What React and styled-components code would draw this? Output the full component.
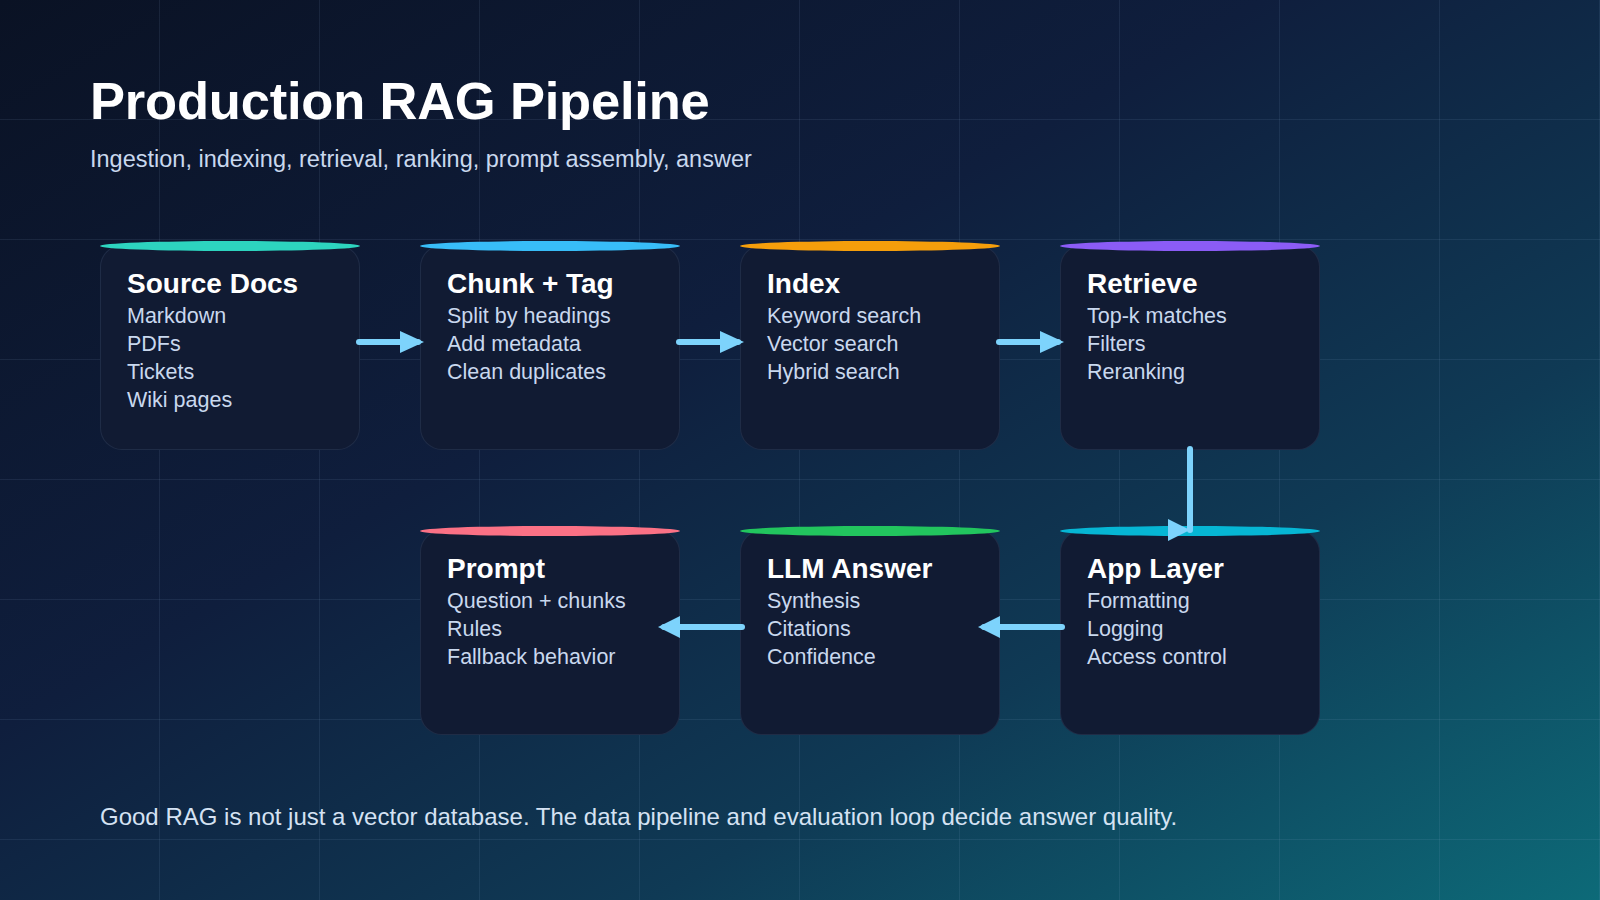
import React from "react";
import styled, { createGlobalStyle } from "styled-components";

const Global = createGlobalStyle`
  html, body { margin: 0; padding: 0; }
  body { font-family: "Liberation Sans", Arial, sans-serif; }
`;

const Page = styled.div`
  position: relative;
  width: 1600px;
  height: 900px;
  overflow: hidden;
  box-sizing: border-box;
  padding: 68px 0 0 90px;
  background:
    linear-gradient(rgba(148,180,220,0.10) 1px, transparent 1px) 0 -1px / 160px 120px,
    linear-gradient(90deg, rgba(148,180,220,0.10) 1px, transparent 1px) -1px 0 / 160px 120px,
    linear-gradient(150deg, #0a1224 0%, #0f1e3d 40%, #0f3a55 70%, #0d6a78 100%);
  color: #fff;
`;

const Title = styled.h1`
  margin: 0;
  font-size: 52.5px;
  line-height: 66px;
  font-weight: 700;
  letter-spacing: -0.2px;
`;

const Subtitle = styled.p`
  margin: 12px 0 0;
  font-size: 23.5px;
  color: #c9d8ee;
`;

const Diagram = styled.div`
  position: relative;
  margin: 72px 0 0 10px;
  display: grid;
  grid-template-columns: repeat(4, 260px);
  grid-auto-rows: 205px;
  column-gap: 60px;
  row-gap: 80px;
`;

const Card = styled.div`
  position: relative;
  grid-column: ${(p) => p.$col};
  background: #111b33;
  border: 1px solid rgba(120,150,190,0.14);
  border-radius: 22px;
  padding: 20px 26px;
  &::before {
    content: "";
    position: absolute;
    left: -1px;
    right: -1px;
    top: -5px;
    height: 10px;
    border-radius: 130px / 5px;
    background: ${(p) => p.$accent};
  }
`;

const CardTitle = styled.div`
  font-size: 28px;
  font-weight: 700;
  line-height: 36px;
`;

const Item = styled.div`
  font-size: 21.5px;
  line-height: 28px;
  color: #c9d8ee;
`;

const Connectors = styled.svg`
  position: absolute;
  left: 0;
  top: 0;
  width: 1100px;
  height: 500px;
  overflow: visible;
  pointer-events: none;
`;

const Footer = styled.p`
  margin: 68px 0 0 10px;
  font-size: 24px;
  color: #d5e2f3;
`;

const cards = [
  { t: "Source Docs", c: "#2dd4bf", col: 1, items: ["Markdown", "PDFs", "Tickets", "Wiki pages"] },
  { t: "Chunk + Tag", c: "#38bdf8", col: 2, items: ["Split by headings", "Add metadata", "Clean duplicates"] },
  { t: "Index", c: "#f59e0b", col: 3, items: ["Keyword search", "Vector search", "Hybrid search"] },
  { t: "Retrieve", c: "#8b5cf6", col: 4, items: ["Top-k matches", "Filters", "Reranking"] },
  { t: "Prompt", c: "#fb7185", col: 2, items: ["Question + chunks", "Rules", "Fallback behavior"] },
  { t: "LLM Answer", c: "#22c55e", col: 3, items: ["Synthesis", "Citations", "Confidence"] },
  { t: "App Layer", c: "#06b6d4", col: 4, items: ["Formatting", "Logging", "Access control"] },
];

const A = "#7dd3fc";

export default function App() {
  return (
    <Page>
      <Global />
      <Title>Production RAG Pipeline</Title>
      <Subtitle>Ingestion, indexing, retrieval, ranking, prompt assembly, answer</Subtitle>
      <Diagram>
        {cards.map((c) => (
          <Card key={c.t} $accent={c.c} $col={c.col}>
            <CardTitle>{c.t}</CardTitle>
            {c.items.map((i) => (
              <Item key={i}>{i}</Item>
            ))}
          </Card>
        ))}
        <Connectors viewBox="0 0 1100 500">
          {[0, 320, 640].map((x) => (
            <g key={x}>
              <line x1={259 + x} y1="97" x2={318 + x} y2="97" stroke={A} strokeWidth="6" strokeLinecap="round" />
              <polygon points={`${300 + x},86 ${324 + x},97 ${300 + x},108`} fill={A} />
            </g>
          ))}
          {[0, 320].map((x) => (
            <g key={x}>
              <line x1={564 + x} y1="382" x2={642 + x} y2="382" stroke={A} strokeWidth="6" strokeLinecap="round" />
              <polygon points={`${580 + x},371 ${558 + x},382 ${580 + x},393`} fill={A} />
            </g>
          ))}
          <line x1="1090" y1="204" x2="1090" y2="285" stroke={A} strokeWidth="6" strokeLinecap="round" />
          <polygon points="1068,274 1090,285 1068,296" fill={A} />
        </Connectors>
      </Diagram>
      <Footer>Good RAG is not just a vector database. The data pipeline and evaluation loop decide answer quality.</Footer>
    </Page>
  );
}
